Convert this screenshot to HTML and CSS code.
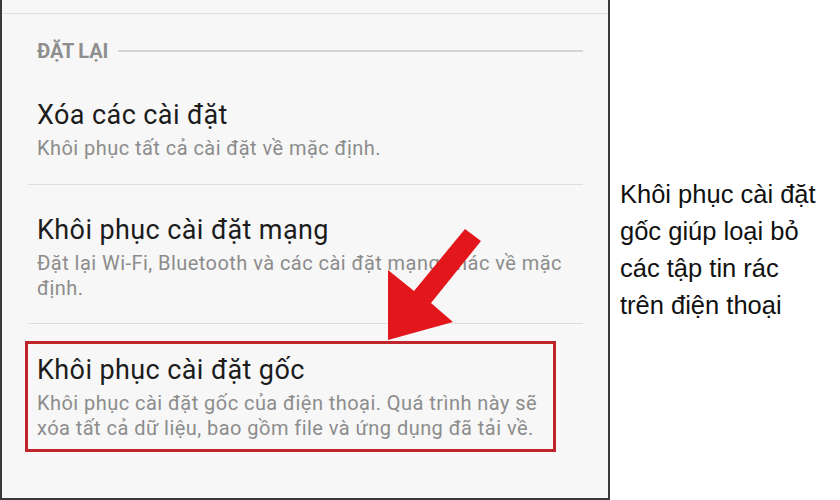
FILE: index.html
```html
<!DOCTYPE html>
<html lang="vi">
<head>
<meta charset="utf-8">
<title>Đặt lại</title>
<link rel="stylesheet" href="styles.css">
</head>
<body>
<div class="page">
  <section class="phone">
    <div class="top-rule"></div>
    <div class="section-head">
      <span class="section-label">ĐẶT LẠI</span>
      <span class="section-line"></span>
    </div>
    <ul class="menu">
      <li class="item item-first">
        <div class="item-title">Xóa các cài đặt</div>
        <div class="item-desc">Khôi phục tất cả cài đặt về mặc định.</div>
      </li>
      <li class="item item-mid">
        <div class="item-title">Khôi phục cài đặt mạng</div>
        <div class="item-desc">Đặt lại Wi-Fi, Bluetooth và các cài đặt mạng khác về mặc định.</div>
      </li>
      <li class="item item-last">
        <div class="highlight">
          <div class="item-title">Khôi phục cài đặt gốc</div>
          <div class="item-desc">Khôi phục cài đặt gốc của điện thoại. Quá trình này sẽ xóa tất cả dữ liệu, bao gồm file và ứng dụng đã tải về.</div>
        </div>
      </li>
    </ul>
    <svg class="arrow" width="610" height="500" viewBox="0 0 610 500" aria-hidden="true">
      <polygon points="465,229 481,241 431,303 453,322 388,340 388,270 414,291" fill="#e3161b"/>
    </svg>
  </section>
  <aside class="note">
    <p class="note-text">Khôi phục cài đặt gốc giúp loại bỏ các tập tin rác trên điện thoại</p>
  </aside>
</div>
</body>
</html>
```
FILE: styles.css
```css
* { box-sizing: border-box; }

html, body {
  margin: 0;
  padding: 0;
  background: #ffffff;
}

.page {
  width: 840px;
  height: 500px;
  display: flex;
  overflow: hidden;
}

/* phone screen on the left */
.phone {
  position: relative;
  width: 610px;
  height: 500px;
  flex: none;
  background: #f7f7f7;
  border-left: 2px solid #3a3a3a;
  border-right: 2px solid #3a3a3a;
  border-bottom: 2px solid #3a3a3a;
  font-family: Roboto, "Noto Sans", sans-serif;
}

.top-rule {
  height: 14px;
  border-bottom: 1px solid #e0e0e0;
}

.section-head {
  display: flex;
  align-items: center;
  gap: 10px;
  margin: 25px 25px 0 35px;
  height: 24px;
}

.section-label {
  font-size: 20px;
  font-weight: 700;
  color: #8e8e8e;
  letter-spacing: -0.2px;
  line-height: 24px;
}

.section-line {
  flex: 1;
  height: 2px;
  background: #d6d6d6;
}

.menu {
  list-style: none;
  margin: 0;
  padding: 0 25px 0 26px;
}

.item {
  padding-left: 9px;
}

.item + .item {
  border-top: 1px solid #dedede;
}

.item-first {
  padding-top: 37px;
  padding-bottom: 23px;
}

.item-mid {
  padding-top: 30px;
  padding-bottom: 22px;
}

.item-last {
  padding-top: 17px;
  padding-left: 0;
}

.highlight {
  margin-left: -3px;
  width: 531px;
  border: 3px solid #c1252c;
  padding: 11px 2px 8px 9px;
}

.item-title {
  font-size: 27px;
  line-height: 30px;
  letter-spacing: 0.4px;
  color: #1c1c1c;
}

.item-desc {
  margin-top: 6px;
  font-size: 20px;
  line-height: 25px;
  letter-spacing: 0.45px;
  color: #8c8c8c;
}

.arrow {
  position: absolute;
  left: -2px;
  top: 0;
  pointer-events: none;
}

/* caption on the right */
.note {
  flex: 1;
  display: flex;
  align-items: center;
  padding-left: 10px;
}

.note-text {
  margin: 0;
  width: 200px;
  font-family: "Liberation Sans", Arial, sans-serif;
  font-size: 25.5px;
  line-height: 37px;
  color: #111111;
}
```
